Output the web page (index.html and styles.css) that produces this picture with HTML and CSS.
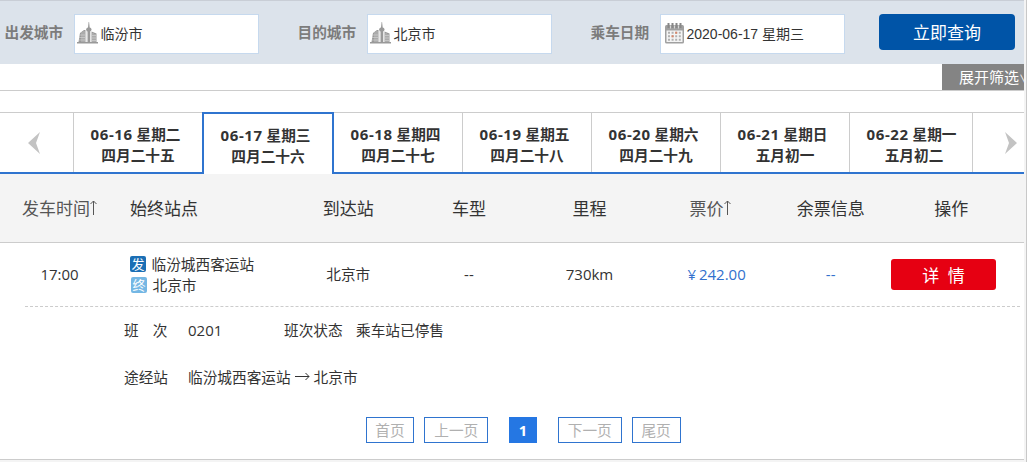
FILE: index.html
```html
<!DOCTYPE html>
<html lang="zh-CN">
<head>
    <meta charset="UTF-8">
    <meta name="viewport" content="width=device-width, initial-scale=1.0">
    <title>班次查询</title>
    <link rel="stylesheet" href="styles.css">
</head>
<body>

<svg class="symbols" width="0" height="0">
    <symbol id="city" viewBox="0 0 22 22">
        <path fill="#999" d="M0 20h21v1.500H0zM1.500 20l1.500-9 4-3h1.500V20zM10.500 20V9.500C8.500 8.500 8.800 6 11 5.500L11.600 0h.5l.6 5.500c2.200.5 2.500 3 .5 4V20zM14.500 20V9.500l5 2V20z"/>
        <path stroke="#d6d6d6" stroke-width=".6" d="M5 10v10M7 9v11M9.500 9v11M13.900 9v11M16 11v9M18 12v8M2 13h6M2 15.500h6M2 18h6M15 13.500h4M15 16h4M15 18.500h4"/>
    </symbol>
</svg>

<div class="container">
    <div class="search">
        <label class="field">
            <span class="label">出发城市</span>
            <span class="input">
                <svg class="icon"><use href="#city"/></svg>
                <span>临汾市</span>
            </span>
        </label>
        <label class="field">
            <span class="label">目的城市</span>
            <span class="input">
                <svg class="icon"><use href="#city"/></svg>
                <span>北京市</span>
            </span>
        </label>
        <label class="field">
            <span class="label">乘车日期</span>
            <span class="input date">
                <svg class="icon" viewBox="0 0 22 22">
                    <rect x="1" y="3" width="19" height="18.500" rx="1.500" fill="#a0a0a0"/>
                    <path fill="#f4f4f4" d="M2.500 8.500h16V20h-16z"/>
                    <path stroke="#888" stroke-width="2" d="M4.500 1v5M8.500 1v5M12.500 1v5M16.500 1v5"/>
                    <path stroke="#eee" stroke-width=".7" d="M6.500 3.500v3M10.500 3.500v3M14.500 3.500v3"/>
                    <path stroke="#b0b0b0" stroke-width="2" stroke-dasharray="2 1.600" d="M4 10.700h13M4 14.200h13M4 17.700h13"/>
                    <path fill="#d98668" d="M7.600 13.200h2v2h-2zM11.200 9.700h2v2h-2z"/>
                </svg>
                <span>2020-06-17 星期三</span>
            </span>
        </label>
        <button class="search-btn">立即查询</button>
    </div>

    <div class="filter">
        <a class="filter-toggle">展开筛选<span class="down">∨</span></a>
    </div>

    <div class="days">
        <a class="arrow">
            <svg width="14" height="24" viewBox="0 0 14 24"><path fill="#c3c3c3" d="M13 1L1 12l12 11L9 12z"/></svg>
        </a>
        <a class="day"><span class="solar"><b>06-16</b> 星期二</span><span>四月二十五</span></a>
        <a class="day active"><span class="solar"><b>06-17</b> 星期三</span><span>四月二十六</span></a>
        <a class="day"><span class="solar"><b>06-18</b> 星期四</span><span>四月二十七</span></a>
        <a class="day"><span class="solar"><b>06-19</b> 星期五</span><span>四月二十八</span></a>
        <a class="day"><span class="solar"><b>06-20</b> 星期六</span><span>四月二十九</span></a>
        <a class="day"><span class="solar"><b>06-21</b> 星期日</span><span>五月初一</span></a>
        <a class="day last"><span class="solar"><b>06-22</b> 星期一</span><span>五月初二</span></a>
        <a class="arrow next">
            <svg width="14" height="24" viewBox="0 0 14 24"><path fill="#c3c3c3" d="M1 1l12 11L1 23l4-11z"/></svg>
        </a>
    </div>

    <div class="row head">
        <div class="sortable">发车时间<svg class="sort" viewBox="0 0 7 15"><path d="M3.500 15V1M.5 4l3-3 3 3"/></svg></div>
        <div class="stations">始终站点</div>
        <div>到达站</div>
        <div>车型</div>
        <div>里程</div>
        <div class="sortable">票价<svg class="sort" viewBox="0 0 7 15"><path d="M3.500 15V1M.5 4l3-3 3 3"/></svg></div>
        <div>余票信息</div>
        <div>操作</div>
    </div>

    <div class="row item">
        <div class="num">17:00</div>
        <div class="stations">
            <p><i class="tag start">发</i>临汾城西客运站</p>
            <p class="to"><i class="tag end">终</i>北京市</p>
        </div>
        <div>北京市</div>
        <div class="num">--</div>
        <div class="num">730km</div>
        <div class="num price"><span class="yen">¥</span>242.00</div>
        <div class="num left">--</div>
        <div class="action"><button class="detail-btn">详 情</button></div>
    </div>

    <div class="detail">
        <div class="line">
            <span class="name">班<span class="gap"></span>次</span>
            <span class="num number">0201</span>
            <span class="state">班次状态</span>
            <span>乘车站已停售</span>
        </div>
        <div class="line">
            <span class="name">途经站</span>
            <span class="route">临汾城西客运站<svg class="to-arrow" viewBox="0 0 15 9"><path d="M0 4.500h14M10.500 1l3.500 3.500L10.500 8"/></svg>北京市</span>
        </div>
    </div>

    <div class="pages">
        <a>首页</a>
        <a>上一页</a>
        <a class="current">1</a>
        <a>下一页</a>
        <a>尾页</a>
    </div>
</div>

</body>
</html>
```
FILE: styles.css
```css
* {
    box-sizing: border-box;
}

body {
    margin: 0;
    height: 462px;
    overflow: hidden;
    background-color: #f4f4f4;
    border-right: 1px solid #c8c8c8;
    font-family: "Open Sans", "Noto Sans CJK SC", sans-serif;
    font-size: 14.67px;
    color: #333;
}

.symbols {
    position: absolute;
}

.container {
    width: 1024px;
    height: 460px;
    background-color: #fff;
    border-bottom: 1px solid #ccc;
}

button {
    border: 0;
    padding: 0;
    font-family: inherit;
    color: #fff;
}

/* search bar */
.search {
    display: flex;
    height: 64px;
    padding: 13px 0 0 4.5px;
    border-top: 1px solid #c9ced6;
    background-color: #dce3eb;
}

.field {
    display: flex;
    width: 293px;
}

.label {
    width: 69.5px;
    line-height: 37px;
    font-weight: bold;
    color: #7c7c7c;
}

.input {
    display: flex;
    align-items: center;
    width: 185px;
    height: 40px;
    padding: 0 0 2px 2px;
    border: 1px solid #c6d9ee;
    background-color: #fff;
    font-family: "Liberation Sans", "Noto Sans CJK SC", sans-serif;
    font-size: 14px;
    white-space: nowrap;
}

.icon {
    width: 22px;
    height: 22px;
    margin-right: 1.5px;
    flex: none;
}

.date {
    padding-left: 3px;
}

.date .icon {
    margin-right: .5px;
}

.search-btn {
    width: 136px;
    height: 36px;
    margin-left: -4.5px;
    padding-bottom: 1px;
    border-radius: 4px;
    background-color: #0054a7;
    font-size: 17px;
}

.filter {
    display: flex;
    justify-content: flex-end;
    height: 27px;
    border-bottom: 1px solid #ccc;
}

.filter-toggle {
    width: 82px;
    padding-left: 17px;
    overflow: hidden;
    background-color: #848484;
    color: #fff;
    font-size: 15px;
    line-height: 26px;
    white-space: nowrap;
}

.down {
    font-size: 11px;
}

/* day tabs */
.days {
    display: flex;
    height: 62px;
    margin-top: 21px;
    border-top: 1px solid #ccc;
    border-bottom: 2px solid #2f74cf;
}

.arrow {
    display: flex;
    align-items: center;
    width: 74px;
    padding-left: 27px;
    border-right: 1px solid #ccc;
}

.next {
    width: 51px;
    padding-left: 31px;
    border-right: 0;
}

.day {
    display: flex;
    flex-direction: column;
    align-items: center;
    width: 129px;
    padding-top: 11px;
    border-right: 1px solid #ccc;
    font-weight: bold;
    line-height: 21px;
    white-space: nowrap;
}

.solar {
    margin-right: 5px;
}

.solar b {
    font-size: 15px;
    font-weight: bold;
    letter-spacing: .6px;
}

.active {
    width: 132px;
    margin: -1px 0 -2px -1px;
    border: 2px solid #2f74cf;
    border-bottom: 0;
    background-color: #fff;
}

.last {
    width: 123px;
    padding-left: 6px;
}

/* schedule */
.row {
    display: grid;
    grid-template-columns: 119px 169px repeat(6, 120.6px);
    align-items: center;
    text-align: center;
}

.row .stations {
    padding-left: 11px;
    text-align: left;
}

.head {
    height: 69px;
    padding-bottom: 1px;
    border-bottom: 1px solid #ccc;
    background-color: #f4f4f4;
    font-size: 17px;
}

.sortable {
    color: #555;
}

.sort {
    width: 7px;
    height: 15px;
    fill: none;
    stroke: #555;
}

.item {
    height: 63px;
    padding-bottom: 2px;
}

.item p {
    display: flex;
    align-items: center;
    height: 21px;
    margin: 0;
}

.item .to {
    padding-left: 1px;
}

.num {
    font-size: 15px;
}

.tag {
    width: 16px;
    height: 16px;
    margin: 1px 5.5px 0 0;
    border-radius: 2px;
    background-color: #1b6fb5;
    color: #fff;
    font-size: 13px;
    font-style: normal;
    line-height: 16px;
    text-align: center;
}

.end {
    background-color: #74b7e4;
}

.price {
    padding-left: 13px;
    color: #3270cd;
}

.left {
    color: #3270cd;
}

.yen {
    margin-right: 3px;
}

.action {
    padding-top: 2px;
}

.detail-btn {
    width: 105px;
    height: 31px;
    display: block;
    border-radius: 3px;
    background-color: #e60012;
    font-size: 17px;
    word-spacing: 4px;
}

.detail {
    height: 111px;
    margin: 0 4px 0 25px;
    padding: 0 0 0 99px;
    border-top: 1px dashed #ccc;
}

.line {
    display: flex;
    height: 47px;
    line-height: 47px;
}

.name {
    width: 64px;
}

.gap {
    display: inline-block;
    width: 14px;
}

.number {
    width: 96px;
}

.state {
    width: 72px;
}

.to-arrow {
    width: 15px;
    height: 9px;
    margin: 0 4px 2px;
    fill: none;
    stroke: #333;
}

/* pagination */
.pages {
    display: flex;
    justify-content: center;
    gap: 10px;
    padding-left: 22px;
}

.pages a {
    height: 26px;
    padding: 0 8.8px;
    border: 1px solid #2f74cf;
    color: #b0b0b0;
    line-height: 24px;
}

.pages .current {
    width: 28px;
    margin: 0 11px;
    background-color: #2577e3;
    border-color: #2577e3;
    color: #fff;
    font-weight: bold;
}
```
